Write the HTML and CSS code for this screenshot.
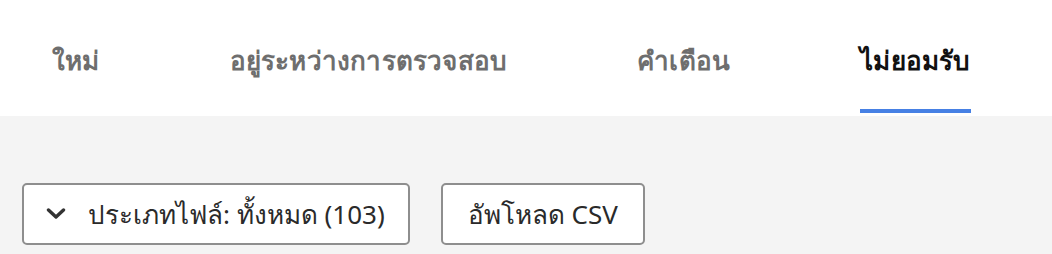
FILE: index.html
```html
<!DOCTYPE html>
<html lang="th">
<head>
    <meta charset="UTF-8">
    <title>ไฟล์</title>
    <link rel="stylesheet" href="styles.css">
</head>
<body>
    <div class="tabs">
        <div class="tab">ใหม่</div>
        <div class="tab">อยู่ระหว่างการตรวจสอบ</div>
        <div class="tab">คำเตือน</div>
        <div class="tab active">ไม่ยอมรับ</div>
    </div>

    <div class="content">
        <div class="toolbar">
            <button class="btn" type="button">
                <svg class="chevron" width="20" height="12" viewBox="0 0 20 12">
                    <path d="M2.5 2 L10 9 L17.5 2" fill="none" stroke="#333" stroke-width="3.4" stroke-linecap="round" stroke-linejoin="round"/>
                </svg>
                ประเภทไฟล์: ทั้งหมด (103)
            </button>
            <button class="btn btn-plain" type="button">อัพโหลด CSV</button>
        </div>
    </div>
</body>
</html>
```

FILE: styles.css
```css
body {
    margin: 0;
    background-color: #f4f4f4;
    font-family: "Noto Sans", "Open Sans", sans-serif;
}

.tabs {
    display: flex;
    gap: 130px;
    height: 116px;
    padding-left: 52px;
    background-color: #ffffff;
    box-sizing: border-box;
}

.tab {
    display: flex;
    align-items: center;
    height: 113px;
    padding-top: 12px;
    box-sizing: border-box;
    border-bottom: 4px solid transparent;
    font-size: 26px;
    font-weight: bold;
    color: #6e6e6e;
    letter-spacing: 0.2px;
}

.tab.active {
    color: #111111;
    border-bottom-color: #4680e4;
}

.content {
    padding: 67px 22px 0;
}

.toolbar {
    display: flex;
    gap: 31px;
}

.btn {
    display: flex;
    align-items: center;
    gap: 22px;
    height: 62px;
    padding: 0 23px 0 22px;
    background-color: #ffffff;
    border: 2px solid #8e8e8e;
    border-radius: 5px;
    font-family: "Noto Sans", "Open Sans", sans-serif;
    font-size: 26px;
    color: #2a2a2a;
}

.btn-plain {
    padding: 0 25px;
}

.chevron {
    display: block;
}
```
